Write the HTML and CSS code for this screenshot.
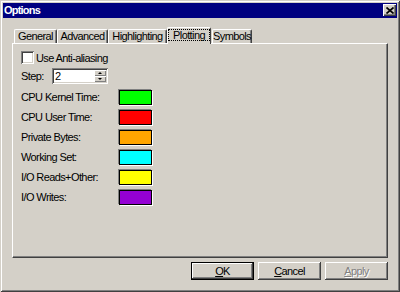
FILE: index.html
```html
<!DOCTYPE html>
<html>
<head>
<meta charset="utf-8">
<link rel="stylesheet" href="styles.css">
</head>
<body>
<div class="window">
  <div class="titlebar">
    <span class="title">Options</span>
    <span class="close"><svg width="8" height="7" viewBox="0 0 8 7"><path d="M0.5 0.5 L7.5 6.5 M7.5 0.5 L0.5 6.5" stroke="#000" stroke-width="1.7"/></svg></span>
  </div>
  <div class="client">
    <div class="tabs">
      <div class="tab w-general">General</div>
      <div class="tab w-advanced">Advanced</div>
      <div class="tab w-highlight">Highlighting</div>
      <div class="tab sel w-plot"><span class="focus">Plotting</span></div>
      <div class="tab w-symbols">Symbols</div>
    </div>
    <div class="panel">
      <div class="check-row"><span class="checkbox"></span><span class="check-label">Use Anti-aliasing</span></div>
      <div class="step-row">
        <span class="step-label">Step:</span>
        <div class="field">
          <span class="val">2</span>
          <div class="spin">
            <span class="spin-btn"><span class="arr-up"></span></span>
            <span class="spin-btn"><span class="arr-down"></span></span>
          </div>
        </div>
      </div>
      <div class="colors">
        <div class="crow"><span class="clabel">CPU Kernel Time:</span><span class="swatch c-green"></span></div>
        <div class="crow"><span class="clabel">CPU User Time:</span><span class="swatch c-red"></span></div>
        <div class="crow"><span class="clabel">Private Bytes:</span><span class="swatch c-orange"></span></div>
        <div class="crow"><span class="clabel">Working Set:</span><span class="swatch c-cyan"></span></div>
        <div class="crow"><span class="clabel">I/O Reads+Other:</span><span class="swatch c-yellow"></span></div>
        <div class="crow"><span class="clabel">I/O Writes:</span><span class="swatch c-purple"></span></div>
      </div>
    </div>
    <div class="buttons">
      <div class="btn default"><u>O</u>K</div>
      <div class="btn"><u>C</u>ancel</div>
      <div class="btn disabled"><u>A</u>pply</div>
    </div>
  </div>
</div>
</body>
</html>
```
FILE: styles.css
```css
* { box-sizing: border-box; margin: 0; padding: 0; }
html, body { width: 400px; height: 292px; overflow: hidden; }
body {
  font-family: "Liberation Sans", Arial, sans-serif;
  font-size: 11px;
  letter-spacing: -0.6px;
  color: #000;
  background: #d4d0c8;
}
.window {
  width: 400px;
  height: 292px;
  padding: 3px;
  background: #d4d0c8;
  display: flex;
  flex-direction: column;
  box-shadow: inset 1px 1px #d4d0c8, inset -1px -1px #404040, inset 2px 2px #fff, inset -2px -2px #808080;
}
.titlebar {
  height: 15px;
  background: #000080;
  display: flex;
  justify-content: space-between;
  align-items: flex-start;
  padding: 0 1px;
}
.title {
  color: #fff;
  font-weight: bold;
  line-height: 15px;
  letter-spacing: -0.8px;
}
.close {
  width: 13px;
  height: 12px;
  margin-top: 1px;
  background: #d4d0c8;
  display: flex;
  align-items: center;
  justify-content: center;
  box-shadow: inset 1px 1px #fff, inset -1px -1px #404040, inset -2px -2px #808080;
}
.close svg { display: block; }
.client {
  flex: 1;
  display: flex;
  flex-direction: column;
  padding: 9px 9px 0 9px;
}
.tabs {
  height: 16px;
  display: flex;
  align-items: flex-end;
  padding-left: 2px;
}
.tab {
  height: 14px;
  line-height: 13px;
  text-align: center;
  border-top: 1px solid #fff;
  border-left: 1px solid #fff;
  border-right: 1px solid #404040;
  border-radius: 2px 2px 0 0;
  box-shadow: inset -1px 0 #808080;
  background: #d4d0c8;
  white-space: nowrap;
}
.w-general { width: 43px; }
.w-advanced { width: 51px; }
.w-highlight { width: 59px; }
.w-plot { width: 44px; }
.w-symbols { width: 40px; margin-left: 1px; }
.tab.sel {
  height: 17px;
  margin-bottom: -1px;
  position: relative;
  z-index: 1;
  box-shadow: none;
}
.focus {
  display: block;
  margin-top: 1px;
  height: 12px;
  line-height: 11px;
  border: 1px dotted #000;
}
.panel {
  height: 215px;
  border-top: 1px solid #fff;
  border-left: 1px solid #fff;
  border-right: 1px solid #404040;
  border-bottom: 1px solid #404040;
  box-shadow: inset -1px -1px #808080;
  padding: 7px 0 0 8px;
}
.check-row {
  display: flex;
  align-items: center;
  height: 13px;
}
.checkbox {
  width: 13px;
  height: 13px;
  background: #fff;
  box-shadow: inset 1px 1px #808080, inset -1px -1px #fff, inset 2px 2px #404040, inset -2px -2px #d4d0c8;
}
.check-label { margin-left: 2px; }
.step-row {
  display: flex;
  align-items: center;
  height: 16px;
  margin-top: 4px;
}
.step-label { width: 31px; }
.field {
  width: 56px;
  height: 16px;
  background: #fff;
  padding: 2px;
  display: flex;
  box-shadow: inset 1px 1px #808080, inset -1px -1px #fff, inset 2px 2px #404040, inset -2px -2px #d4d0c8;
}
.val { flex: 1; line-height: 12px; padding-left: 1px; }
.spin {
  width: 12px;
  display: flex;
  flex-direction: column;
}
.spin-btn {
  height: 6px;
  background: #d4d0c8;
  display: flex;
  align-items: center;
  justify-content: center;
  box-shadow: inset 1px 1px #fff, inset -1px -1px #808080;
}
.arr-up {
  width: 0; height: 0;
  border-left: 2px solid transparent;
  border-right: 2px solid transparent;
  border-bottom: 2px solid #000;
}
.arr-down {
  width: 0; height: 0;
  border-left: 2px solid transparent;
  border-right: 2px solid transparent;
  border-top: 2px solid #000;
}
.colors {
  margin-top: 5px;
  display: flex;
  flex-direction: column;
}
.crow {
  display: flex;
  align-items: flex-start;
  height: 20px;
}
.clabel {
  width: 97px;
  line-height: 17px;
}
.swatch {
  width: 33px;
  height: 15px;
  margin: 1px;
  border: 1px solid #000;
  box-shadow: -1px -1px 0 #808080, 1px 1px 0 #fff;
}
.c-green { background: #00ff00; }
.c-red { background: #ff0000; }
.c-orange { background: #ffa500; }
.c-cyan { background: #00ffff; }
.c-yellow { background: #ffff00; }
.c-purple { background: #9400d3; }
.buttons {
  margin-top: 4px;
  display: flex;
  justify-content: flex-end;
  gap: 4px;
}
.btn {
  width: 63px;
  height: 18px;
  line-height: 18px;
  text-align: center;
  background: #d4d0c8;
  box-shadow: inset -1px -1px #404040, inset 1px 1px #fff, inset -2px -2px #808080;
}
.btn.default {
  box-shadow: inset 0 0 0 1px #000, inset -2px -2px #404040, inset 2px 2px #fff, inset -3px -3px #808080;
}
.btn.disabled {
  color: #808080;
  text-shadow: 1px 1px #fff;
}
```
